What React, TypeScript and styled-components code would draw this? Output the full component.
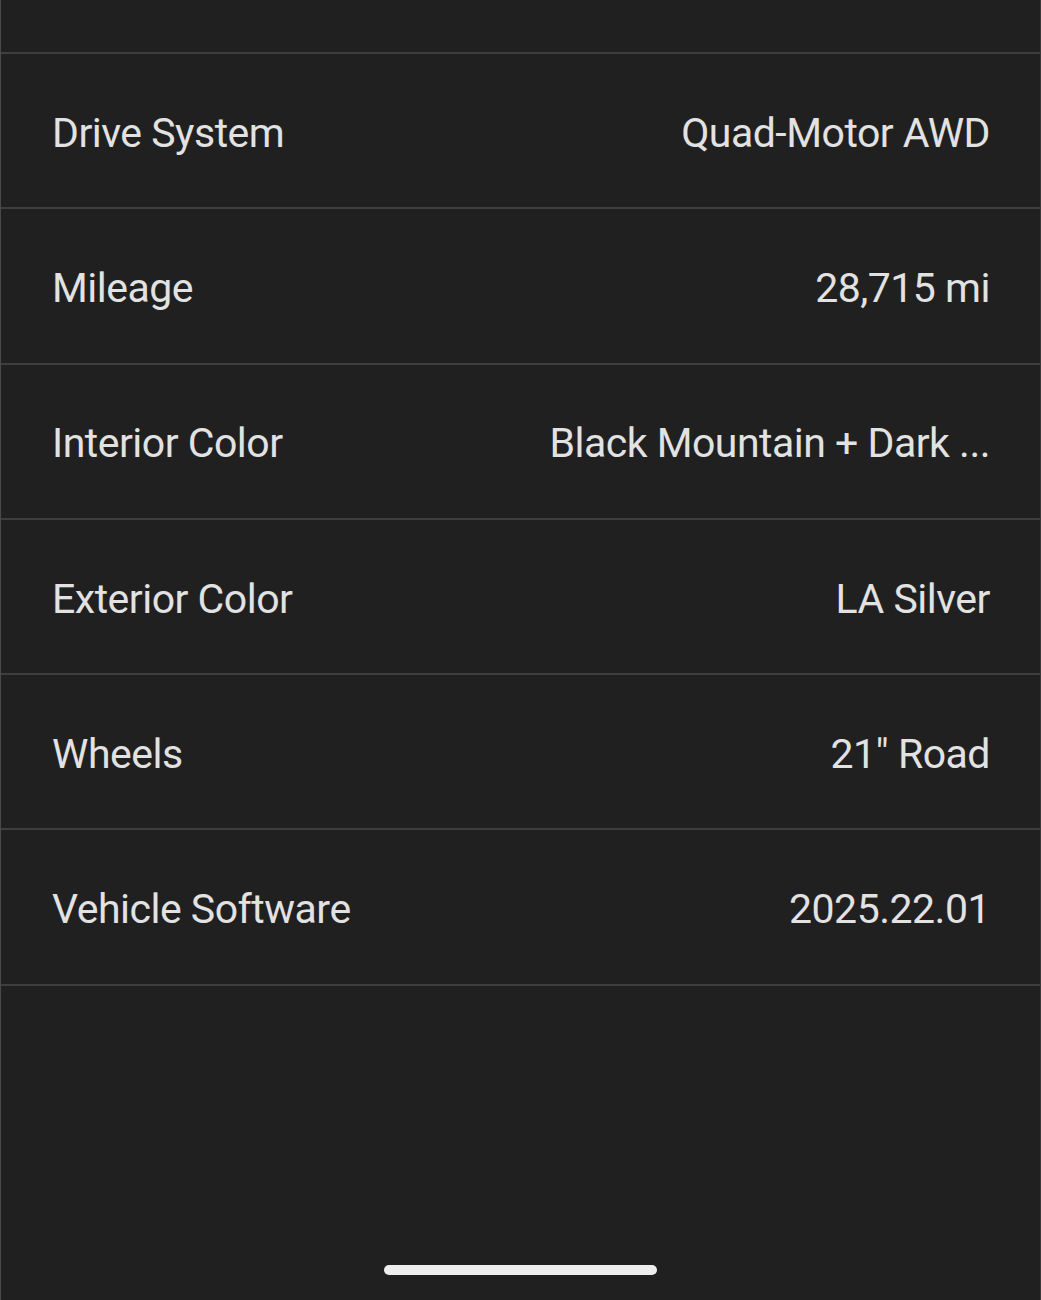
import React from 'react';
import styled, { createGlobalStyle } from 'styled-components';

const GlobalStyle = createGlobalStyle`
  html, body {
    margin: 0;
    padding: 0;
    background: #202020;
  }
  body {
    font-family: Roboto, "Noto Sans", "Liberation Sans", sans-serif;
    -webkit-font-smoothing: antialiased;
  }
`;

type Spec = {
  label: string;
  value: string;
};

// the long interior value is shown truncated on the device
const specs: Spec[] = [
  { label: 'Drive System', value: 'Quad-Motor AWD' },
  { label: 'Mileage', value: '28,715 mi' },
  { label: 'Interior Color', value: 'Black Mountain + Dark ...' },
  { label: 'Exterior Color', value: 'LA Silver' },
  { label: 'Wheels', value: '21" Road' },
  { label: 'Vehicle Software', value: '2025.22.01' },
];

const App = () => {
  return (
    <>
      <GlobalStyle />
      <Screen>
        <TopSpace />
        <List>
          {specs.map((s) => (
            <Row key={s.label}>
              <Label>{s.label}</Label>
              <Value>{s.value}</Value>
            </Row>
          ))}
        </List>
        <Footer>
          <HomeBar />
        </Footer>
      </Screen>
    </>
  );
};

const Screen = styled.main`
  width: 1041px;
  height: 1300px;
  box-sizing: border-box;
  background: #202020;
  border-left: 1px solid #4a4a4a;
  border-right: 1px solid #3a3a3a;
  display: flex;
  flex-direction: column;
  overflow: hidden;
`;

const TopSpace = styled.div`
  height: 52px;
  flex: none;
`;

const List = styled.section`
  display: flex;
  flex-direction: column;
  border-top: 2px solid #3e3e3e;
`;

const Row = styled.div`
  height: 155.3px;
  box-sizing: border-box;
  border-bottom: 2px solid #3e3e3e;
  display: flex;
  align-items: center;
  justify-content: space-between;
  padding: 4px 50px 0 51px;
`;

const Text = styled.span`
  font-size: 41px;
  color: #e2e2e2;
  letter-spacing: -0.5px;
  white-space: nowrap;
`;

const Label = styled(Text)``;

const Value = styled(Text)`
  text-align: right;
  letter-spacing: -0.5px;
`;

const Footer = styled.div`
  flex: 1;
  display: flex;
  align-items: flex-end;
  justify-content: center;
  padding-bottom: 25px;
`;

const HomeBar = styled.div`
  width: 273px;
  height: 10px;
  border-radius: 5px;
  background: #eeeeee;
`;

export default App;
